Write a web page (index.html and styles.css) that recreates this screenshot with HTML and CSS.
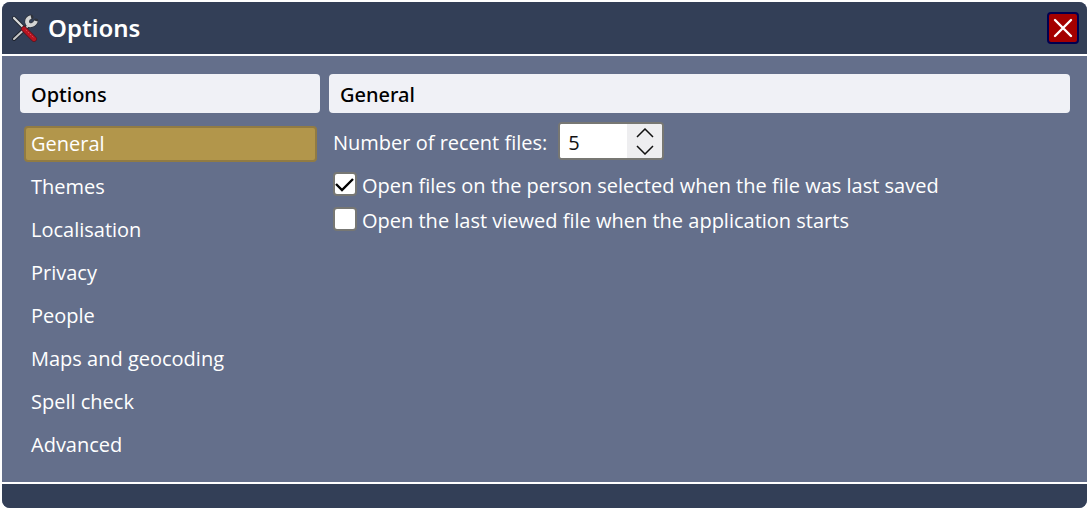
FILE: index.html
```html
<!DOCTYPE html>
<html lang="en">
<head>
<meta charset="utf-8">
<title>Options</title>
<meta name="viewport" content="width=device-width, initial-scale=1">
<link rel="stylesheet" href="styles.css">
</head>
<body>
<main class="dialog">
  <header class="titlebar">
    <svg class="tools" viewBox="0 0 28 28" aria-hidden="true">
      <g fill="none" stroke-linecap="round">
        <path d="M4 25 L18 12" stroke="#1d222c" stroke-width="4"/>
        <path d="M21 3 Q17 4 17 8 Q18 12 22 11 Q25 10 26 7" stroke="#30343c" stroke-width="5"/>
        <path d="M4 25 L18 12" stroke="#c5c6c7" stroke-width="2"/>
        <path d="M21 3 Q17 4 17 8 Q18 12 22 11 Q25 10 26 7" stroke="#d4d5d5" stroke-width="3.8" stroke-linecap="butt"/>
        <path d="M4 4 L14 14" stroke="#252a34" stroke-width="4"/>
        <path d="M4 4 L14 14" stroke="#d8dadb" stroke-width="2.2"/>
        <path d="M14 15 L24 25" stroke="#5a1620" stroke-width="6"/>
        <path d="M14 15 L24 25" stroke="#b81420" stroke-width="4.4"/>
        <path d="M16 16 L24 24" stroke="#da4550" stroke-width="1" stroke-dasharray="1 2"/>
      </g>
    </svg>
    <h1 class="title">Options</h1>
    <button class="close" type="button" aria-label="Close">
      <svg class="cross" viewBox="0 0 20 20" aria-hidden="true"><path d="M2 2 L18 18 M18 2 L2 18" fill="none" stroke="#fff" stroke-width="2.4" stroke-linecap="round"/></svg>
    </button>
  </header>
  <div class="content">
    <nav class="sidebar" aria-label="Options">
      <h2 class="heading">Options</h2>
      <ul class="pages">
        <li><a class="page current" href="#general" aria-current="page">General</a></li>
        <li><a class="page" href="#themes">Themes</a></li>
        <li><a class="page" href="#localisation">Localisation</a></li>
        <li><a class="page" href="#privacy">Privacy</a></li>
        <li><a class="page" href="#people">People</a></li>
        <li><a class="page" href="#maps">Maps and geocoding</a></li>
        <li><a class="page" href="#spelling">Spell check</a></li>
        <li><a class="page" href="#advanced">Advanced</a></li>
      </ul>
    </nav>
    <section class="panel" id="general">
      <h2 class="heading">General</h2>
      <form class="settings">
        <div class="field">
          <label class="caption" for="recent">Number of recent files:</label>
          <div class="spinner">
            <input class="number" id="recent" type="text" inputmode="numeric" value="5">
            <div class="steps">
              <button class="step" type="button" aria-label="Increase"><svg class="arrow" viewBox="0 0 18 10" aria-hidden="true"><path d="M1 9 L9 1 L17 9" fill="none" stroke="#111" stroke-width="1.5"/></svg></button>
              <button class="step" type="button" aria-label="Decrease"><svg class="arrow" viewBox="0 0 18 10" aria-hidden="true"><path d="M1 1 L9 9 L17 1" fill="none" stroke="#111" stroke-width="1.5"/></svg></button>
            </div>
          </div>
        </div>
        <label class="option">
          <span class="box"><input class="tick" type="checkbox" checked><svg class="mark" viewBox="0 0 20 20" aria-hidden="true"><path d="M1 10 L7 16 L18 5" fill="none" stroke="#000" stroke-width="2.4"/></svg></span>
          Open files on the person selected when the file was last saved
        </label>
        <label class="option">
          <span class="box"><input class="tick" type="checkbox"><svg class="mark" viewBox="0 0 20 20" aria-hidden="true"><path d="M1 10 L7 16 L18 5" fill="none" stroke="#000" stroke-width="2.4"/></svg></span>
          Open the last viewed file when the application starts
        </label>
      </form>
    </section>
  </div>
  <footer class="footer"></footer>
</main>
</body>
</html>
```
FILE: styles.css
```css
* { box-sizing: border-box; }
body {
  margin: 0;
  padding: 2px 3px 2px 2px;
  min-height: 100vh;
  display: flex;
  background: #fff;
  color: #fff;
  font: 20px/28px "Open Sans", "Noto Sans", sans-serif;
}
.dialog {
  flex: 1;
  display: flex;
  flex-direction: column;
  border-radius: 8px;
  overflow: hidden;
  background: #646f8b;
}
.titlebar {
  display: flex;
  align-items: center;
  gap: 10px;
  padding: 10px 8px;
  background: #333f57;
  border-bottom: 2px solid #fff;
}
.tools { width: 28px; height: 28px; }
.title {
  flex: 1;
  margin: 0;
  font-family: "Noto Sans", "Open Sans", sans-serif;
  font-size: 24px;
  line-height: 32px;
  font-weight: 600;
}
.close {
  display: grid;
  place-items: center;
  width: 32px;
  height: 32px;
  padding: 0;
  border: 2px solid #000050;
  border-radius: 4px;
  background: #a40000;
}
.cross { width: 20px; height: 20px; }
.content {
  flex: 1;
  display: grid;
  grid-template-columns: 300px 1fr;
  gap: 9px;
  padding: 18px 17px 18px 18px;
}
.heading {
  margin: 0;
  padding: 7px 11px 4px;
  border-radius: 4px;
  background: #f0f1f6;
  color: #000;
  font-family: "Noto Sans", "Open Sans", sans-serif;
  font-size: 20px;
  line-height: 28px;
  font-weight: 500;
}
.pages {
  display: grid;
  gap: 7px;
  margin: 0;
  padding: 13px 3px 0 4px;
  list-style: none;
}
.page {
  display: block;
  padding: 2px 5px;
  border: 2px solid transparent;
  border-radius: 4px;
  color: inherit;
  text-decoration: none;
}
.current { background: #b2964b; border-color: #917b43; }
.settings {
  display: flex;
  flex-direction: column;
  align-items: flex-start;
  padding: 9px 4px;
}
.field {
  display: flex;
  align-items: center;
  gap: 11px;
  margin-bottom: 7px;
}
.caption { padding-top: 3px; }
.spinner {
  display: flex;
  width: 106px;
  height: 38px;
  border: 2px solid #777773;
  border-radius: 4px;
  overflow: hidden;
  background: #fff;
}
.number {
  flex: 1;
  min-width: 0;
  padding: 4px 8px 0;
  border: 0;
  background: #fff;
  color: #111;
  font: inherit;
}
.steps {
  display: grid;
  width: 35px;
  background: #eeeef0;
}
.step {
  display: grid;
  place-items: center;
  padding: 0;
  border: 0;
  background: none;
}
.arrow { width: 18px; height: 10px; }
.option {
  display: flex;
  align-items: center;
  gap: 5px;
  padding: 5px 0 2px;
}
.box { display: grid; padding-bottom: 4px; }
.tick {
  grid-area: 1 / 1;
  appearance: none;
  width: 24px;
  height: 24px;
  margin: 0;
  border: 2px solid #777773;
  border-radius: 4px;
  background: #fff;
}
.mark {
  grid-area: 1 / 1;
  place-self: center;
  width: 20px;
  height: 20px;
  visibility: hidden;
  pointer-events: none;
}
.tick:checked + .mark { visibility: visible; }
.footer {
  height: 26px;
  border-top: 2px solid #fff;
  background: #333f57;
}
```
